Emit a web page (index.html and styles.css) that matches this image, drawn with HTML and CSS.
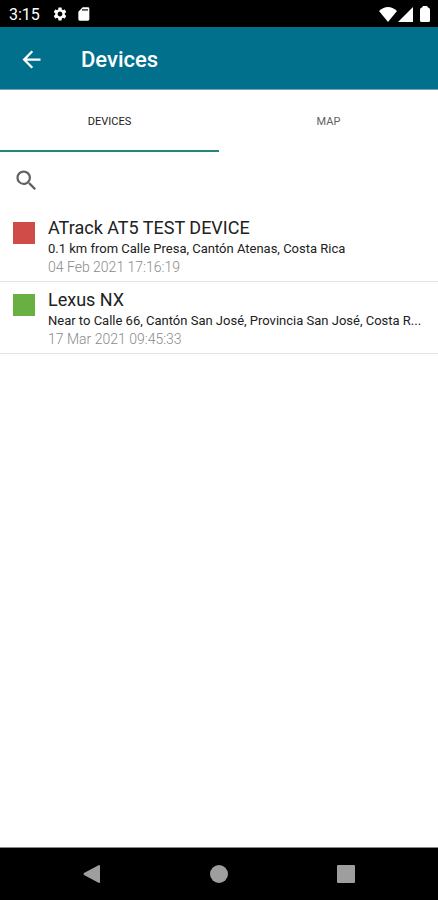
FILE: index.html
```html
<!DOCTYPE html>
<html lang="en">
<head>
    <meta charset="UTF-8">
    <meta name="viewport" content="width=device-width, initial-scale=1.0">
    <title>Devices</title>
    <link rel="stylesheet" href="styles.css">
</head>
<body>
    <div class="status-bar">
        <span class="clock">3:15</span>
        <svg class="status-icon" width="16" height="16" viewBox="0 0 24 24">
            <path d="M19.14 12.94c.04-.3.06-.61.06-.94 0-.32-.02-.64-.07-.94l2.03-1.58c.18-.14.23-.41.12-.61l-1.92-3.32c-.12-.22-.37-.29-.59-.22l-2.39.96c-.5-.38-1.03-.7-1.62-.94l-.36-2.54c-.04-.24-.24-.41-.48-.41h-3.84c-.24 0-.43.17-.47.41l-.36 2.54c-.59.24-1.13.57-1.62.94l-2.39-.96c-.22-.08-.47 0-.59.22L2.74 8.87c-.12.21-.08.47.12.61l2.03 1.58c-.05.3-.09.63-.09.94s.02.64.07.94l-2.03 1.58c-.18.14-.23.41-.12.61l1.92 3.32c.12.22.37.29.59.22l2.39-.96c.5.38 1.03.7 1.62.94l.36 2.54c.05.24.24.41.48.41h3.84c.24 0 .44-.17.47-.41l.36-2.54c.59-.24 1.13-.56 1.62-.94l2.39.96c.22.08.47 0 .59-.22l1.92-3.32c.12-.22.07-.47-.12-.61l-2.01-1.58zM12 15.6c-1.98 0-3.6-1.62-3.6-3.6s1.62-3.6 3.6-3.6 3.6 1.62 3.6 3.6-1.62 3.6-3.6 3.6z"/>
        </svg>
        <svg class="status-icon" width="16" height="16" viewBox="0 0 24 24">
            <path d="M18 2h-8L3.500 8.500V20a2 2 0 0 0 2 2H18a2 2 0 0 0 2-2V4a2 2 0 0 0-2-2zM11.500 7H9.500V4.500h2zm3 0h-2V4.500h2zm3 0h-2V4.500h2z"/>
        </svg>
        <div class="status-right">
            <svg width="18" height="15" viewBox="0 0 18 15">
                <path d="M9 15L0 4Q9-4 18 4z"/>
            </svg>
            <svg width="15" height="15" viewBox="0 0 15 15">
                <path d="M15 0v15H0z"/>
            </svg>
            <svg class="battery" width="10" height="16" viewBox="0 0 10 16">
                <path d="M3 0h4l1 1.500Q10 2 10 3.500v11Q10 16 8.500 16h-7Q0 16 0 14.500v-11Q0 2 2 1.500z"/>
            </svg>
        </div>
    </div>

    <header class="app-bar">
        <button class="icon-button" type="button" aria-label="Back">
            <svg width="27" height="27" viewBox="0 0 24 24">
                <path d="M20 11H7.830l5.590-5.590L12 4l-8 8 8 8 1.410-1.410L7.830 13H20v-2z"/>
            </svg>
        </button>
        <h1>Devices</h1>
    </header>

    <div class="tabs" role="tablist">
        <button class="tab active" type="button" role="tab" aria-selected="true">DEVICES</button>
        <button class="tab" type="button" role="tab" aria-selected="false">MAP</button>
    </div>

    <main>
        <div class="search">
            <button class="icon-button" type="button" aria-label="Search">
                <svg width="27" height="27" viewBox="0 0 24 24">
                    <path d="M15.500 14h-.790l-.280-.270A6.470 6.470 0 0 0 16 9.500 6.500 6.500 0 1 0 9.500 16c1.610 0 3.090-.590 4.230-1.570l.270.280v.790l5 4.990L20.490 19l-4.990-5zm-6 0C7.010 14 5 11.990 5 9.500S7.010 5 9.500 5 14 7.010 14 9.500 11.990 14 9.500 14z"/>
                </svg>
            </button>
        </div>

        <ul class="device-list">
            <li class="device">
                <span class="marker offline"></span>
                <div class="info">
                    <h2>ATrack AT5 TEST DEVICE</h2>
                    <p class="address">0.1 km from Calle Presa, Cantón Atenas, Costa Rica</p>
                    <p class="date">04 Feb 2021 17:16:19</p>
                </div>
            </li>
            <li class="device">
                <span class="marker online"></span>
                <div class="info">
                    <h2>Lexus NX</h2>
                    <p class="address">Near to Calle 66, Cantón San José, Provincia San José, Costa R...</p>
                    <p class="date">17 Mar 2021 09:45:33</p>
                </div>
            </li>
        </ul>
    </main>

    <nav class="nav-bar">
        <button type="button" aria-label="Back">
            <svg width="18" height="18" viewBox="0 0 18 18"><path d="M16 0Q17 0 17 1v16q0 1-1 1L1 10Q0 9 1 8z"/></svg>
        </button>
        <button type="button" aria-label="Home">
            <svg width="18" height="18" viewBox="0 0 18 18"><circle cx="9" cy="9" r="9"/></svg>
        </button>
        <button type="button" aria-label="Recent apps">
            <svg width="18" height="18" viewBox="0 0 18 18"><rect width="18" height="18" rx="1"/></svg>
        </button>
    </nav>
</body>
</html>
```

FILE: styles.css
```css
* {
    box-sizing: border-box;
}
body {
    margin: 0;
    min-height: 100vh;
    display: flex;
    flex-direction: column;
    background-color: #fff;
    color: #212121;
    font-family: Roboto, sans-serif;
}
button {
    border: none;
    background: none;
    padding: 0;
    color: inherit;
    font-family: inherit;
    cursor: pointer;
}
svg {
    display: block;
    fill: currentColor;
}
h1, h2, p {
    margin: 0;
}

/* Status bar */
.status-bar {
    display: flex;
    align-items: center;
    height: 27px;
    padding: 1px 8px 0 9px;
    background-color: #000;
    color: #fff;
}
.clock {
    width: 31px;
    margin-right: 12px;
    font-size: 16px;
    font-weight: 400;
}
.status-icon {
    margin-right: 8px;
}
.status-right {
    display: flex;
    align-items: center;
    gap: 1px;
    margin-left: auto;
}
.battery {
    margin-left: 6px;
}

/* App bar */
.app-bar {
    display: flex;
    align-items: center;
    height: 63px;
    padding: 2px 18px 0;
    background-color: #00708d;
    border-bottom: 1px solid #6fa5b5;
    color: #fff;
}
.app-bar h1 {
    margin-left: 36px;
    font-size: 22px;
    font-weight: 500;
}

/* Tabs */
.tabs {
    display: flex;
    height: 62px;
}
.tab {
    flex: 1;
    border-top: 2px solid transparent;
    border-bottom: 2px solid transparent;
    color: #616161;
    font-size: 11px;
}
.tab.active {
    border-bottom-color: #26857c;
    color: #212121;
}

/* Device list */
main {
    flex: 1;
}
.search {
    display: flex;
    align-items: center;
    height: 58px;
    padding: 0 13px 2px;
    color: #616161;
}
.device-list {
    margin: 0;
    padding: 0;
    list-style: none;
}
.device {
    display: flex;
    gap: 13px;
    padding: 6px 6px 5px 13px;
    border-bottom: 1px solid #e4e4e4;
}
.marker {
    flex: none;
    width: 22px;
    height: 22px;
    margin-top: 6px;
}
.marker.offline {
    background-color: #d04c49;
}
.marker.online {
    background-color: #69b043;
}
.info {
    min-width: 0;
}
.info h2 {
    font-size: 18px;
    font-weight: 400;
    line-height: 24px;
}
.info p {
    line-height: 18px;
}
.address {
    overflow: hidden;
    font-size: 13px;
    white-space: nowrap;
    text-overflow: ellipsis;
}
.date {
    color: #8a8a8a;
    font-size: 14px;
    font-weight: 300;
}

/* System navigation */
.nav-bar {
    display: flex;
    justify-content: center;
    height: 53px;
    border-top: 1px solid #888;
    background-color: #000;
    color: #9e9e9e;
}
.nav-bar button {
    display: flex;
    align-items: center;
    justify-content: center;
    width: 29%;
}
```
